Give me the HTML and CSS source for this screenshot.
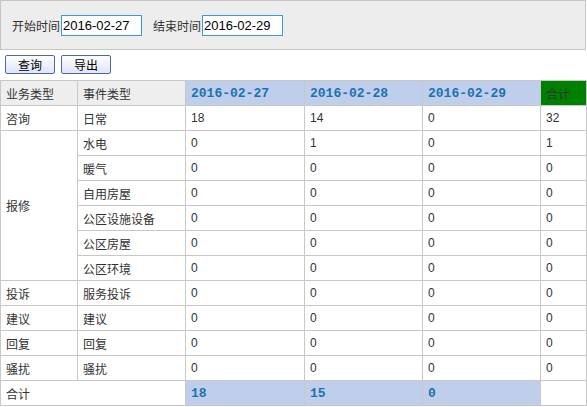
FILE: index.html
```html
<!DOCTYPE html>
<html lang="zh-CN">
<head>
    <meta charset="UTF-8">
    <title>事件统计</title>
    <link rel="stylesheet" href="styles.css">
</head>
<body>
    <div class="search">
        <label>开始时间<input type="text" class="date" value="2016-02-27"></label>
        <label>结束时间<input type="text" class="date" value="2016-02-29"></label>
    </div>
    <div class="tools">
        <button class="btn">查询</button>
        <button class="btn">导出</button>
    </div>
    <table class="stat">
        <colgroup>
            <col class="c1"><col class="c2"><col class="c3"><col class="c4"><col class="c5"><col class="c6">
        </colgroup>
        <thead>
            <tr>
                <th class="gray">业务类型</th>
                <th class="gray">事件类型</th>
                <th class="day">2016-02-27</th>
                <th class="day">2016-02-28</th>
                <th class="day">2016-02-29</th>
                <th class="sum">合计</th>
            </tr>
        </thead>
        <tbody>
            <tr><td>咨询</td><td>日常</td><td>18</td><td>14</td><td>0</td><td>32</td></tr>
            <tr><td rowspan="6">报修</td><td>水电</td><td>0</td><td>1</td><td>0</td><td>1</td></tr>
            <tr><td>暖气</td><td>0</td><td>0</td><td>0</td><td>0</td></tr>
            <tr><td>自用房屋</td><td>0</td><td>0</td><td>0</td><td>0</td></tr>
            <tr><td>公区设施设备</td><td>0</td><td>0</td><td>0</td><td>0</td></tr>
            <tr><td>公区房屋</td><td>0</td><td>0</td><td>0</td><td>0</td></tr>
            <tr><td>公区环境</td><td>0</td><td>0</td><td>0</td><td>0</td></tr>
            <tr><td>投诉</td><td>服务投诉</td><td>0</td><td>0</td><td>0</td><td>0</td></tr>
            <tr><td>建议</td><td>建议</td><td>0</td><td>0</td><td>0</td><td>0</td></tr>
            <tr><td>回复</td><td>回复</td><td>0</td><td>0</td><td>0</td><td>0</td></tr>
            <tr><td>骚扰</td><td>骚扰</td><td>0</td><td>0</td><td>0</td><td>0</td></tr>
        </tbody>
        <tfoot>
            <tr>
                <td colspan="2">合计</td>
                <td class="day">18</td>
                <td class="day">15</td>
                <td class="day">0</td>
                <td></td>
            </tr>
        </tfoot>
    </table>
</body>
</html>
```

FILE: styles.css
```css
* {margin:0;padding:0;box-sizing: border-box;}
body {background: #fff;color: #333;font-family: "Liberation Sans", "Noto Sans CJK SC", sans-serif;font-size: 12px;}
.search {width: 586px;height: 50px;background: #ededed;border: 1px solid #c6c6c6;display: flex;align-items: center;gap: 11px;padding: 0 0 0 11px;}
.search label {display: flex;align-items: center;color: #333;}
.date {width: 81px;height: 21px;margin-left: 1px;border: 1px solid #3b9bd6;padding: 0 1px;font-family: "Liberation Sans", sans-serif;font-size: 13px;color: #000;background: #fff;}
.tools {display: flex;gap: 6px;padding: 5px 5px 6px;}
.btn {width: 50px;height: 19px;border: 1px solid #5566a6;border-radius: 2px;background: linear-gradient(#ffffff, #dfe4f6);font-family: "Noto Sans CJK SC", sans-serif;font-size: 12px;color: #000;}
.stat {width: 586px;border-collapse: collapse;table-layout: fixed;}
.c1 {width: 77px;} .c2 {width: 108px;} .c3 {width: 119px;} .c4 {width: 118px;} .c5 {width: 118px;} .c6 {width: 46px;}
.stat th, .stat td {height: 25px;border: 1px solid #c8c8c8;padding: 0 5px;text-align: left;font-weight: normal;white-space: nowrap;}
.stat td {font-size: 12px;}
.stat .gray {background: #eeeeee;}
.stat .day {background: #bfcfeb;color: #1b72b0;font-family: "Liberation Mono", monospace;font-weight: bold;font-size: 13px;}
.stat .sum {background: #008000;color: #333;}
```
